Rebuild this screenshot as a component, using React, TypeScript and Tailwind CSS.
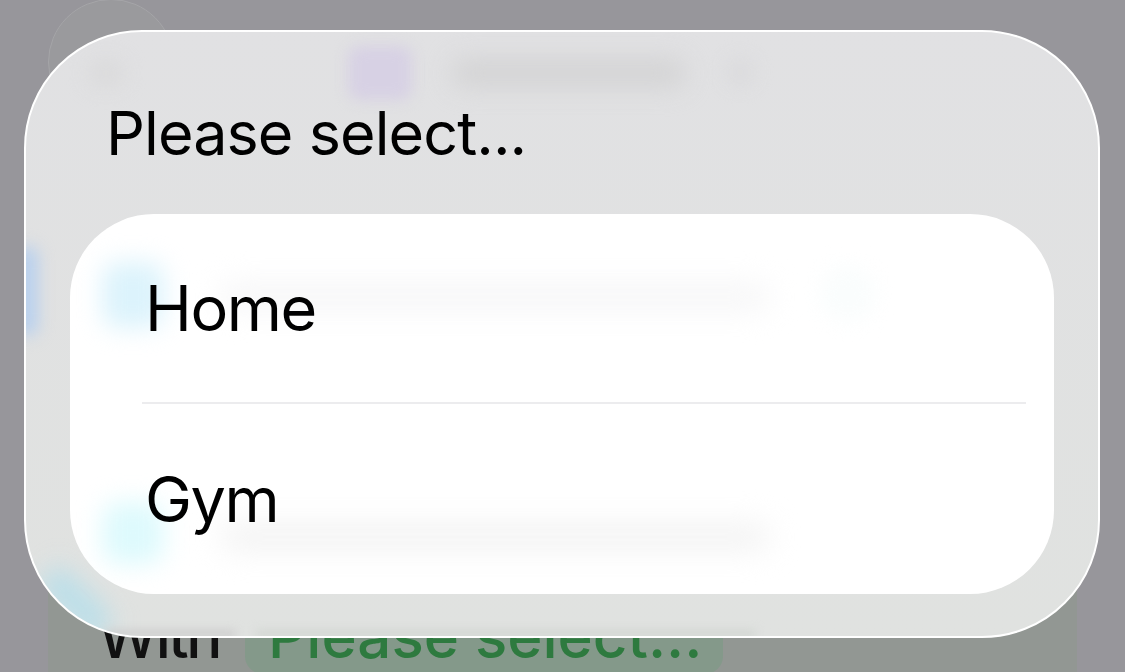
import type { FC } from 'react';

const font = "font-['Inter','Liberation_Sans',sans-serif]";

// what sits behind the sheet, only the edges of it show
const Backdrop: FC = () => (
  <div className="absolute inset-0 flex flex-col justify-end overflow-hidden bg-[#97969b] px-[48px]">
    <div className="absolute left-[48px] top-[-1px] size-[126px] rounded-full border border-[#a5a5a8] bg-[#9a9a9d]" />
    <div className="flex h-[82px] items-end gap-[25px] bg-[#929793] pb-[4px] pl-[50px] text-[60px] font-medium leading-[64px] text-[#111]">
      <span className="tracking-[-2.5px]">With</span>
      <span className="-mb-[6px] rounded-[18px] bg-[#84998a] pb-[6px] pl-[23px] pr-[20px] text-[#2e7a3f]">
        Please select...
      </span>
    </div>
  </div>
);

// blurred content showing through the glass
const Blob: FC<{ className: string }> = ({ className }) => (
  <div className={`absolute ${className}`} />
);

export default function App() {
  return (
    <div className={`${font} relative h-[672px] w-[1125px] overflow-hidden`}>
      <Backdrop />
      <div className="absolute left-[24px] top-[30px] h-[608px] w-[1076px] overflow-hidden rounded-[118px] border-2 border-white bg-gradient-to-b from-[#e1e1e3] to-[#e0e2e0]">
        <Blob className="left-[322px] top-[14px] h-[54px] w-[64px] rounded-xl bg-[#d7d1e4] blur-[7px]" />
        <Blob className="left-[425px] top-[26px] h-[30px] w-[235px] rounded-full bg-[#d4d4d5] blur-[12px]" />
        <Blob className="left-[698px] top-[24px] size-[32px] rounded-full bg-[#dcdcde] blur-[8px]" />
        <Blob className="left-[62px] top-[28px] h-[26px] w-[36px] rounded-full bg-[#dadadb] blur-[10px]" />
        <Blob className="left-[-10px] top-[214px] h-[90px] w-[22px] rounded-full bg-[#b8d0ee] blur-[8px]" />
        <Blob className="bottom-[16px] left-[8px] h-[34px] w-[84px] rotate-45 rounded-full bg-[#bcdfe9] blur-[12px]" />
        <Blob className="bottom-[-2px] left-[80px] h-[8px] w-[130px] bg-[#cdcdcd] blur-[5px]" />
        <Blob className="bottom-[-2px] left-[230px] h-[8px] w-[500px] bg-[#d2d6d2] blur-[5px]" />

        <div className="flex h-[182px] items-center pl-[80px] pt-[20px] text-[61px] leading-none tracking-[-0.9px] text-black">
          Please select...
        </div>

        <div className="relative mx-[44px] flex flex-col overflow-hidden rounded-[84px] bg-white">
          <Blob className="left-[32px] top-[48px] h-[66px] w-[62px] rounded-2xl bg-[#dcf3fc] blur-[12px]" />
          <Blob className="left-[150px] top-[68px] h-[30px] w-[550px] rounded-full bg-[#f7f7f8] blur-[14px]" />
          <Blob className="left-[750px] top-[52px] size-[56px] rounded-full bg-[#fafdfd] blur-[10px]" />
          <Blob className="left-[32px] top-[288px] h-[62px] w-[62px] rounded-2xl bg-[#defafd] blur-[12px]" />
          <Blob className="left-[150px] top-[308px] h-[30px] w-[550px] rounded-full bg-[#f4f4f4] blur-[14px]" />

          <div className="relative flex h-[188px] items-center pl-[75px] text-[63px] leading-none tracking-[-1.4px] text-black">
            Home
          </div>
          <div className="relative ml-[72px] mr-[28px] h-[2px] bg-[#ececee]" />
          <div className="relative flex h-[190px] items-center pl-[75px] text-[63px] leading-none tracking-[-1.4px] text-black">
            Gym
          </div>
        </div>
      </div>
    </div>
  );
}
